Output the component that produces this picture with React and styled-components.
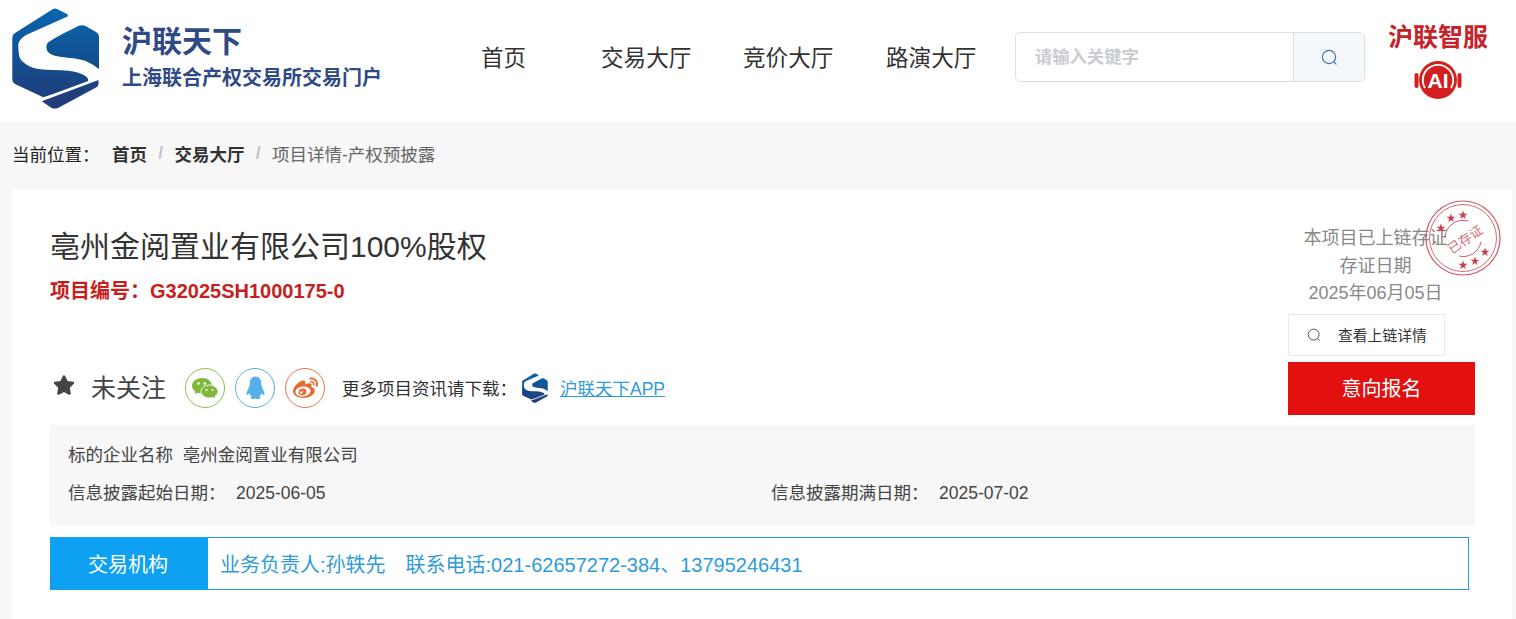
import React from 'react';
import styled, { createGlobalStyle } from 'styled-components';
import { FaStar, FaWeibo } from 'react-icons/fa';

const GlobalStyle = createGlobalStyle`
  html, body {
    margin: 0;
    padding: 0;
    background: #f7f7f7;
    overflow: hidden;
    font-family: "Liberation Sans", "Noto Sans CJK SC", sans-serif;
    color: #333;
  }
  * { box-sizing: border-box; }
`;

const Page = styled.div`
  display: flex;
  flex-direction: column;
  min-height: 100vh;
`;

const Header = styled.header`
  display: flex;
  align-items: center;
  height: 122px;
  padding: 0 0 6px 12px;
  background: #fff;
`;

const Brand = styled.div`
  display: flex;
  align-items: center;
  width: 443px;
  flex-shrink: 0;
`;

const BrandText = styled.div`
  display: flex;
  flex-direction: column;
  margin: -2px 0 0 22px;
  color: #2f4a84;
  font-weight: 700;
`;

const BrandName = styled.div`
  font-size: 30px;
  line-height: 36px;
`;

const BrandSub = styled.div`
  margin-top: 5px;
  font-size: 20px;
  line-height: 26px;
`;

const Nav = styled.nav`
  display: flex;
  width: 534px;
  flex-shrink: 0;
  margin: 2px 0 0 26px;
`;

const NavItem = styled.a`
  width: ${p => p.$w}px;
  flex-shrink: 0;
  font-size: 22.6px;
  line-height: 30px;
  color: #333;
`;

const SearchBox = styled.div`
  display: flex;
  width: 350px;
  height: 50px;
  margin-bottom: 2px;
  border: 1px solid #dcdfe6;
  border-radius: 5px;
  overflow: hidden;
  flex-shrink: 0;
`;

const SearchInput = styled.div`
  flex: 1;
  padding-left: 19px;
  font-size: 17.3px;
  line-height: 48px;
  font-weight: 700;
  color: #c9ccd2;
`;

const SearchButton = styled.div`
  display: flex;
  align-items: center;
  justify-content: center;
  width: 71px;
  border-left: 1px solid #dcdfe6;
  background: #f4f7fb;
`;

const Service = styled.div`
  display: flex;
  flex-direction: column;
  align-items: center;
  gap: 8px;
  width: 100px;
  margin: 6px 0 0 23px;
`;

const ServiceName = styled.div`
  font-size: 25px;
  line-height: 30px;
  font-weight: 700;
  color: #c5222a;
  white-space: nowrap;
`;

const Crumbs = styled.div`
  display: flex;
  align-items: center;
  height: 67px;
  padding: 0 0 4px 12px;
  font-size: 17.5px;
`;

const CrumbLabel = styled.span`
  width: 100px;
  color: #222;
`;

const CrumbLink = styled.a`
  font-weight: 700;
  color: #303133;
`;

const CrumbSep = styled.span`
  margin: 0 11.3px;
  font-weight: 700;
  color: #c0c4cc;
`;

const CrumbCurrent = styled.span`
  color: #666;
`;

const Card = styled.main`
  flex: 1;
  margin: 0 4px 0 12px;
  padding: 36px 37px 0 38px;
  background: #fff;
`;

const TopRow = styled.section`
  display: flex;
  justify-content: space-between;
`;

const LeftCol = styled.div`
  display: flex;
  flex-direction: column;
  justify-content: space-between;
  flex: 1;
`;

const Title = styled.h1`
  margin: 0;
  font-size: 30px;
  line-height: 44px;
  font-weight: 400;
  color: #333;
`;

const Code = styled.div`
  margin-top: 9px;
  font-size: 20px;
  line-height: 26px;
  font-weight: 700;
  color: #c81e1e;
`;

const FollowRow = styled.div`
  display: flex;
  align-items: center;
  height: 53px;
`;

const Follow = styled.div`
  display: flex;
  align-items: center;
  width: 135px;
  padding: 0 0 5px 3px;
  font-size: 25px;
  color: #444;
  & > svg { margin: -1px 16px 0 0; }
`;

const Share = styled.a`
  display: flex;
  align-items: center;
  justify-content: center;
  width: 40px;
  height: 40px;
  margin-right: 10px;
  border: 1px solid ${p => p.$color};
  border-radius: 50%;
`;

const AppHint = styled.span`
  margin: 0 0 1px 7px;
  font-size: 17.5px;
  color: #333;
`;

const AppIcon = styled.span`
  display: flex;
  margin: 0 12px 0 5px;
`;

const AppLink = styled.a`
  margin-bottom: 1px;
  font-size: 17.5px;
  color: #2f9bd8;
  text-decoration: underline;
`;

const RightCol = styled.div`
  position: relative;
  display: flex;
  flex-direction: column;
  width: 187px;
  flex-shrink: 0;
`;

const Chain = styled.div`
  width: 175px;
  font-size: 18px;
  line-height: 27.5px;
  text-align: center;
  white-space: nowrap;
  color: #888;
`;

const Stamp = styled.svg`
  position: absolute;
  top: -25px;
  left: 137px;
`;

const DetailButton = styled.a`
  display: flex;
  align-items: center;
  width: 157px;
  height: 42px;
  margin-top: 6px;
  padding-left: 18px;
  border: 1px solid #f0e8e8;
  font-size: 14.8px;
  color: #333;
  & > span { margin-left: 17px; }
`;

const ApplyButton = styled.a`
  display: flex;
  align-items: center;
  justify-content: center;
  height: 53px;
  margin-top: 6px;
  padding-bottom: 2px;
  background: #e31010;
  font-size: 20px;
  color: #fff;
`;

const InfoPanel = styled.section`
  height: 100px;
  margin-top: 10px;
  padding: 12px 18px 0;
  background: #f7f7f7;
  font-size: 17.5px;
  color: #444;
`;

const InfoLine = styled.div`
  display: flex;
  line-height: 36px;
  height: ${p => p.$h || 36}px;
`;

const InfoField = styled.div`
  width: 703px;
  flex-shrink: 0;
  display: flex;
`;

const InfoLabel = styled.span`
  width: 168px;
  flex-shrink: 0;
`;

const OrgBar = styled.section`
  display: flex;
  height: 53px;
  margin: 12px 6px 0 0;
  border: 1px solid #2f9bd0;
  font-size: 20px;
  line-height: 51px;
`;

const OrgTag = styled.div`
  width: 158px;
  margin: -1px 0 -1px -1px;
  padding: 2px 2px 0 0;
  background: #0ea1f2;
  line-height: 53px;
  text-align: center;
  color: #fff;
`;

const OrgText = styled.div`
  padding: 2px 0 0 12px;
  color: #2f9bd8;
  white-space: nowrap;
`;

const OrgPhone = styled.span`
  margin-left: 20px;
`;

// three separate blue pieces, the white S is just the gap between them
const LogoMark = ({ width, height, id }) => (
  <svg width={width} height={height} viewBox="0 0 88 101">
    <defs>
      <linearGradient id={id} gradientUnits="userSpaceOnUse" x1="0" y1="0" x2="0" y2="100">
        <stop offset="0" stopColor="#0a66b2" />
        <stop offset="0.5" stopColor="#12508f" />
        <stop offset="1" stopColor="#243977" />
      </linearGradient>
    </defs>
    <path
      d="M41 1 Q43 0 45 1 L55 6 Q57 7.5 55 8.7 L14 27 C9 30 6 34 6.3 38 C6.5 45 7 50 9.7 52.7 C14 57 20 60 26.3 61 C36 62.5 47 61.5 56.3 62.7 C63 63.5 69 65 73 67.7 C76 69.5 77 72 75.7 73.3 C60 79 45 85 31.3 89.3 L4 76.5 Q0.3 74.5 0.3 71 L0.3 30 Q0.3 26.5 3 25 Z"
      fill={`url(#${id})`}
    />
    <path
      d="M73 17.7 L84 24 Q87 25.5 87 29.3 L87 61 C82 57 78 55 73 52.7 C63 49.5 52 50 43 47.7 C38 46.5 35 44 34.7 41 C34.3 38.5 34 37 36 34.5 C44 29 56 23 66.3 18 Q70 16.5 73 17.7 Z"
      fill={`url(#${id})`}
    />
    <path d="M29.7 93.3 L86.5 72 L86.5 76 Q86.5 78 84 79.5 L46 100 Q42 101 39.7 100 Z" fill={`url(#${id})`} />
  </svg>
);

const SearchGlyph = ({ size, color }) => (
  <svg width={size} height={size} viewBox="0 0 18 18" fill="none" stroke={color} strokeWidth="1.2">
    <circle cx="8.5" cy="8.5" r="7" />
    <path d="M13.8 13.8 L16 16" strokeLinecap="round" />
  </svg>
);

const AiBadge = () => (
  <svg width="48" height="40" viewBox="0 0 48 40">
    <rect x="0.5" y="13" width="4" height="15" rx="2" fill="#d3201f" />
    <rect x="43.5" y="13" width="4" height="15" rx="2" fill="#d3201f" />
    <circle cx="24" cy="20" r="19" fill="#d3201f" />
    <path d="M11 28 A15.2 15.2 0 1 1 37 28" fill="none" stroke="#fff" strokeWidth="1.8" />
    <text x="24" y="27.5" textAnchor="middle" fontSize="21" fontWeight="700" fill="#fff" fontFamily="Liberation Sans, sans-serif">AI</text>
  </svg>
);

const WechatIcon = () => (
  <svg width="26" height="21" viewBox="0 0 26 21">
    <path d="M10 0 C4.5 0 0 3.5 0 7.8 C0 10.2 1.4 12.3 3.5 13.7 L2.7 16.2 L5.8 14.7 C7.2 15.2 8.5 15.5 10 15.5 C15.5 15.5 20 12 20 7.8 C20 3.5 15.5 0 10 0 Z" fill="#7fb83a" />
    <path d="M17.5 7 C12.8 7 9 10 9 13.6 C9 17.2 12.8 20 17.5 20 C18.6 20 19.6 19.9 20.6 19.5 L23.8 21 L23 18.4 C24.9 17.2 26 15.5 26 13.6 C26 10 22.2 7 17.5 7 Z" fill="#7fb83a" stroke="#fff" strokeWidth="0.9" />
    <circle cx="6.5" cy="5.5" r="1.3" fill="#fff" />
    <circle cx="12.8" cy="5.5" r="1.3" fill="#fff" />
    <circle cx="14.5" cy="12" r="1.1" fill="#fff" />
    <circle cx="20.5" cy="12" r="1.1" fill="#fff" />
  </svg>
);

const QqIcon = () => (
  <svg width="19" height="24" viewBox="0 0 20 24">
    <path
      d="M10 0 C5 0 4 4 4 8 C4 10 2 13 1 16 C0 19 1 20 2 19 L3.5 17.5 C4 19 5 20 6 21 C4 22 5 24 8 23.5 L10 23 L12 23.5 C15 24 16 22 14 21 C15 20 16 19 16.5 17.5 L18 19 C19 20 20 19 19 16 C18 13 16 10 16 8 C16 4 15 0 10 0 Z"
      fill="#55b0ea"
    />
  </svg>
);

const stampStars = [
  [-12, -21], [0, -24], [-22, -11], [22, 13], [12, 22], [0, 26],
];

const ChainStamp = () => (
  <Stamp width="76" height="76" viewBox="-38 -38 76 76">
    <g fill="none" stroke="#cf5a66">
      <circle r="37" strokeWidth="1.2" />
      <circle r="33.5" strokeWidth="0.9" />
      <path d="M-18 0 A18 18 0 0 1 5 -17" strokeWidth="1" />
      <path d="M18 4 A18 18 0 0 1 -4 18" strokeWidth="1" />
    </g>
    {stampStars.map(([x, y]) => (
      <text key={`${x}-${y}`} x={x} y={y + 3.5} textAnchor="middle" fontSize="9.5" fill="#c8404e">★</text>
    ))}
    <text
      x="1"
      y="7"
      textAnchor="middle"
      fontSize="13"
      fill="#d96b76"
      transform="rotate(-35)"
      fontFamily="Liberation Sans, Noto Sans CJK SC, sans-serif"
    >
      已存证
    </text>
  </Stamp>
);

const App = () => {
  return (
    <Page>
      <GlobalStyle />
      <Header>
        <Brand>
          <LogoMark width={88} height={101} id="logo-large" />
          <BrandText>
            <BrandName>沪联天下</BrandName>
            <BrandSub>上海联合产权交易所交易门户</BrandSub>
          </BrandText>
        </Brand>
        <Nav>
          <NavItem $w={120}>首页</NavItem>
          <NavItem $w={142}>交易大厅</NavItem>
          <NavItem $w={143}>竞价大厅</NavItem>
          <NavItem $w={129}>路演大厅</NavItem>
        </Nav>
        <SearchBox>
          <SearchInput>请输入关键字</SearchInput>
          <SearchButton>
            <SearchGlyph size={17} color="#3f6f9f" />
          </SearchButton>
        </SearchBox>
        <Service>
          <ServiceName>沪联智服</ServiceName>
          <AiBadge />
        </Service>
      </Header>

      <Crumbs>
        <CrumbLabel>当前位置：</CrumbLabel>
        <CrumbLink>首页</CrumbLink>
        <CrumbSep>/</CrumbSep>
        <CrumbLink>交易大厅</CrumbLink>
        <CrumbSep>/</CrumbSep>
        <CrumbCurrent>项目详情-产权预披露</CrumbCurrent>
      </Crumbs>

      <Card>
        <TopRow>
          <LeftCol>
            <div>
              <Title>亳州金阅置业有限公司100%股权</Title>
              <Code>项目编号：G32025SH1000175-0</Code>
            </div>
            <FollowRow>
              <Follow>
                <FaStar size={22} />
                未关注
              </Follow>
              <Share $color="#8cc152"><WechatIcon /></Share>
              <Share $color="#5aaee0"><QqIcon /></Share>
              <Share $color="#e8764a"><FaWeibo size={25} color="#e9682f" /></Share>
              <AppHint>更多项目资讯请下载：</AppHint>
              <AppIcon>
                <LogoMark width={26} height={30} id="logo-small" />
              </AppIcon>
              <AppLink>沪联天下APP</AppLink>
            </FollowRow>
          </LeftCol>
          <RightCol>
            <Chain>
              本项目已上链存证
              <br />
              存证日期
              <br />
              2025年06月05日
            </Chain>
            <ChainStamp />
            <DetailButton>
              <SearchGlyph size={14} color="#444" />
              <span>查看上链详情</span>
            </DetailButton>
            <ApplyButton>意向报名</ApplyButton>
          </RightCol>
        </TopRow>

        <InfoPanel>
          <InfoLine $h={38}>
            <span>标的企业名称&nbsp;&nbsp;亳州金阅置业有限公司</span>
          </InfoLine>
          <InfoLine>
            <InfoField>
              <InfoLabel>信息披露起始日期：</InfoLabel>
              <span>2025-06-05</span>
            </InfoField>
            <InfoField>
              <InfoLabel>信息披露期满日期：</InfoLabel>
              <span>2025-07-02</span>
            </InfoField>
          </InfoLine>
        </InfoPanel>

        <OrgBar>
          <OrgTag>交易机构</OrgTag>
          <OrgText>
            业务负责人:孙轶先
            <OrgPhone>联系电话:021-62657272-384、13795246431</OrgPhone>
          </OrgText>
        </OrgBar>
      </Card>
    </Page>
  );
};

export default App;
